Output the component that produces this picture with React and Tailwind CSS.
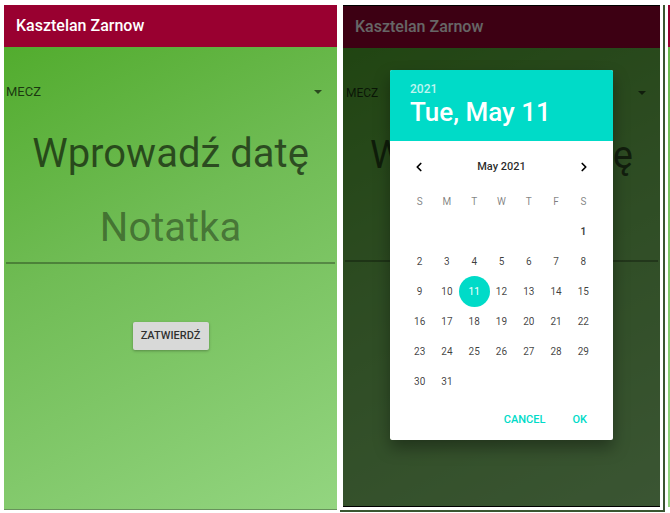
import React from "react";
import { ChevronLeft, ChevronRight } from "lucide-react";

const weekdays = ["S", "M", "T", "W", "T", "F", "S"];
const weeks = [
  [null, null, null, null, null, null, 1],
  [2, 3, 4, 5, 6, 7, 8],
  [9, 10, 11, 12, 13, 14, 15],
  [16, 17, 18, 19, 20, 21, 22],
  [23, 24, 25, 26, 27, 28, 29],
  [30, 31, null, null, null, null, null],
];

function NoteForm({ small }) {
  const big = small ? "text-[38px]" : "text-[40px]";
  return (
    <div className="flex min-w-0 flex-1 flex-col">
      <header className="flex h-[42px] items-center bg-[#990030] px-3 text-[16px] font-medium text-white">
        <h1>Kasztelan Zarnow</h1>
      </header>
      <form
        className="flex flex-1 flex-col bg-[linear-gradient(153deg,#52ac2e,#70bc55_40%,#93d580)] pt-[33px]"
        onSubmit={(e) => e.preventDefault()}
      >
        <div className={`flex items-center justify-between ${small ? "pr-[14px]" : "pr-[15px]"}`}>
          <select
            aria-label="Typ"
            className={`h-6 min-w-0 flex-1 appearance-none bg-transparent text-black/70 ${small ? "px-[3px] text-[12px]" : "px-[2px] text-[13px]"}`}
          >
            <option>MECZ</option>
          </select>
          <svg className="h-1 w-2 text-black/60" viewBox="0 0 8 4" aria-hidden="true">
            <path d="M0 0h8L4 4z" fill="currentColor" />
          </svg>
        </div>
        <p className={`mt-[22px] text-center leading-[56px] whitespace-nowrap text-black/60 ${big}`}>Wprowadź datę</p>
        <input
          aria-label="Notatka"
          placeholder="Notatka"
          className={`mx-[2px] mt-[14px] min-w-0 border-b-2 border-black/30 bg-transparent pb-1 text-center text-black/60 placeholder:text-black/40 ${big} ${small ? "h-[65px]" : "h-[68px]"}`}
        />
        <button className="mx-auto mt-[58px] h-7 w-19 rounded-[2px] bg-[#d8d9d8] text-[11px] font-medium text-black/80 shadow-[0_1px_3px_rgba(0,0,0,0.3)]">
          ZATWIERDŹ
        </button>
      </form>
    </div>
  );
}

function DatePicker() {
  return (
    <div
      role="dialog"
      aria-label="May 2021"
      className="absolute inset-x-[47px] top-[64px] flex flex-col rounded-[2px] bg-white shadow-[0_8px_16px_rgba(0,0,0,0.35)]"
    >
      <div className="flex h-[71px] flex-col rounded-t-[2px] bg-[#00dbc8] px-5 pt-3 font-medium">
        <p className="text-[12px] leading-[15px] text-white/75">2021</p>
        <p className="text-[26px] leading-[30px] text-white">Tue, May 11</p>
      </div>
      <div className="mt-3 flex h-7 items-center justify-between px-[22px]">
        <button aria-label="Previous month">
          <ChevronLeft className="size-[14px] text-black" strokeWidth={3} />
        </button>
        <span className="text-[11px] font-medium text-black/85">May 2021</span>
        <button aria-label="Next month">
          <ChevronRight className="size-[14px] text-black" strokeWidth={3} />
        </button>
      </div>
      <div className="px-4 pt-[5px]">
        <table className="w-full table-fixed text-center text-[10px]">
          <thead>
            <tr className="h-[30px] text-black/50">
              {weekdays.map((d, i) => (
                <th key={i} className="p-0 font-normal">{d}</th>
              ))}
            </tr>
          </thead>
          <tbody>
            {weeks.map((week, i) => (
              <tr key={i} className="h-[30px] text-black/75">
                {week.map((d, j) => (
                  <td key={j} className="p-0">
                    {d && (
                      <button
                        className={
                          d === 11
                            ? "-m-[2px] size-[31px] rounded-full bg-[#00dbc8] align-middle text-white"
                            : d === 1
                              ? "font-bold"
                              : ""
                        }
                      >
                        {d}
                      </button>
                    )}
                  </td>
                ))}
              </tr>
            ))}
          </tbody>
        </table>
      </div>
      <div className="flex h-11 items-center justify-end gap-[27px] pt-1 pr-[26px] text-[11px] font-medium text-[#00dbc8]">
        <button>CANCEL</button>
        <button>OK</button>
      </div>
    </div>
  );
}

export default function App() {
  return (
    <main className="flex min-h-screen items-stretch bg-white pl-1 font-[Roboto,'Liberation_Sans',sans-serif]">
      <section className="mt-[5px] mb-[3px] flex min-w-0 flex-[333] border-b border-[#68935c]">
        <NoteForm />
      </section>
      <section className="mt-[5px] mb-px ml-[3px] flex min-w-0 flex-[317] border-r-2 border-b-2 border-[#3a5530] pr-[3px] pb-[3px] pl-[3px]">
        <div className="relative flex min-w-0 flex-1 border-y border-black">
          <NoteForm small />
          <div className="absolute inset-0 bg-black/60" />
          <DatePicker />
        </div>
      </section>
      <aside className="mt-[5px] mb-[6px] ml-[3px] flex w-[2px] flex-col">
        <div className="h-[42px] bg-[#990030]" />
        <div className="flex-1 bg-linear-to-b from-[#69b94c] to-[#93d580]" />
      </aside>
    </main>
  );
}
